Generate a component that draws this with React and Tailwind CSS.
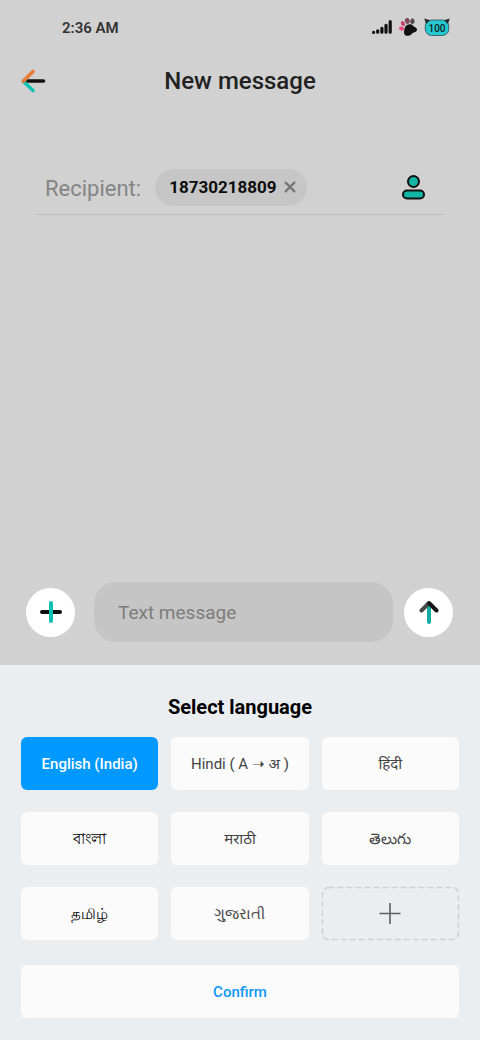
import { useState } from "react";
import { X } from "lucide-react";

const languages = [
  { id: "en", label: "English (India)" },
  { id: "hi-latn", label: "Hindi ( A ➝ अ )" },
  { id: "hi", label: "हिंदी" },
  { id: "bn", label: "বাংলা" },
  { id: "mr", label: "मराठी" },
  { id: "te", label: "తెలుగు" },
  { id: "ta", label: "தமிழ்" },
  { id: "gu", label: "ગુજરાતી" },
];

// Bengali and Tamil glyphs are thin, so they get a darker colour
const thinScripts = ["bn", "ta"];

function SignalIcon() {
  return (
    <svg width="20" height="14" viewBox="0 0 20 14" fill="none" stroke="#111" strokeWidth="3.2" strokeLinecap="round">
      <path d="M1.6 12.3v.1M5.7 10.8v1.4M9.9 8.3v3.9M14 5.3v6.9M18.2 1.7v10.5" />
    </svg>
  );
}

function PawIcon() {
  return (
    <svg width="18" height="18" viewBox="0 0 18 18">
      <ellipse cx="2.6" cy="10.6" rx="2.6" ry="2" fill="#ea4a7d" transform="rotate(15 2.6 10.6)" />
      <ellipse cx="3.9" cy="5.6" rx="1.9" ry="2.6" fill="#c8426f" transform="rotate(-35 3.9 5.6)" />
      <ellipse cx="8.3" cy="2.9" rx="2" ry="2.8" fill="#8f4660" stroke="#4a2a36" strokeWidth="0.5" transform="rotate(-12 8.3 2.9)" />
      <ellipse cx="13.4" cy="3.2" rx="1.8" ry="2.5" fill="#5c4a52" stroke="#33242b" strokeWidth="0.5" />
      <path
        d="M8 7C10 5.900 13.200 6 14.300 8c.7 1.200 3.600 1.200 3.700 3.500.1 2.200-2 2.700-3.300 3-1.400.3-2.600 3-5.400 3.300-2.900.3-4.500-1.500-4.300-4.100.1-1.400.4-1.800.6-3C5.800 9.200 6.600 7.700 8 7z"
        fill="#111"
      />
    </svg>
  );
}

function BatteryIcon() {
  return (
    <svg width="26" height="18" viewBox="0 0 26 18" role="img" aria-label="Battery 100%">
      <rect x="1.2" y="2" width="23.6" height="15.5" rx="6.5" fill="#25c9cf" stroke="#2b4a4c" strokeWidth="0.8" />
      <path d="M.3.500l5.700 1.700-4 3.800zM25.700.500l-5.700 1.700 4 3.800z" fill="#1c2a2b" />
      <text x="13" y="13.500" textAnchor="middle" fontSize="10" fontWeight="500" fill="#122">100</text>
    </svg>
  );
}

function BackIcon() {
  return (
    <svg width="26" height="24" viewBox="0 0 26 24" fill="none" strokeWidth="3.6" strokeLinecap="round">
      <path d="M4 12h19.500" stroke="#111" />
      <path d="M3.500 12.500l9.500 9" stroke="#10c2b2" />
      <path d="M3.500 12l9.500-9.500" stroke="#e87a35" />
    </svg>
  );
}

function ContactIcon() {
  return (
    <svg width="24" height="26" viewBox="0 0 24 26" fill="#12b5a6" stroke="#111" strokeWidth="2">
      <circle cx="12.500" cy="7.500" r="5.500" />
      <rect x="2" y="16.500" width="21" height="8" rx="4" />
    </svg>
  );
}

function AttachIcon() {
  return (
    <svg width="24" height="24" viewBox="0 0 24 24" fill="none" strokeWidth="4" strokeLinecap="round">
      <path d="M3 12h18" stroke="#111" />
      <path d="M12 3v18" stroke="#10c2b2" />
    </svg>
  );
}

function SendIcon() {
  return (
    <svg width="20" height="24" viewBox="0 0 20 24" fill="none" strokeWidth="4" strokeLinecap="round">
      <path d="M10 4v18" stroke="#12ada0" />
      <path d="M9.500 3.500l-7 7" stroke="#4a4a4a" />
      <path d="M10 3l7.500 7.500" stroke="#161616" />
    </svg>
  );
}

export default function App() {
  const [selected, setSelected] = useState("en");
  const [recipients, setRecipients] = useState(["18730218809"]);
  const [message, setMessage] = useState("");

  const removeRecipient = (number) => {
    setRecipients(recipients.filter((r) => r !== number));
  };

  const tileColors = (id) => {
    if (selected === id) return "bg-[#0099ff] text-white font-medium";
    if (thinScripts.includes(id)) return "bg-[#fbfbfb] text-black";
    return "bg-[#fbfbfb] text-[#444]";
  };

  return (
    <div className="min-h-screen flex flex-col bg-[#d1d1d1] font-[Roboto,'Noto_Sans',sans-serif] text-[#222]">
      {/* Status bar */}
      <div className="h-14 pl-[62px] pr-[30px] flex items-center justify-between">
        <span className="text-[15px] font-semibold text-[#333]">2:36 AM</span>
        <div className="flex items-center gap-[7px] pb-[2px]">
          <SignalIcon />
          <PawIcon />
          <BatteryIcon />
        </div>
      </div>

      {/* Header */}
      <header className="h-[50px] px-5 grid grid-cols-[32px_1fr_32px] items-center">
        <button type="button" aria-label="Back">
          <BackIcon />
        </button>
        <h1 className="text-2xl font-medium text-center">New message</h1>
      </header>

      {/* Recipient */}
      <div className="mx-[35px] mt-[54px] h-[55px] flex items-center border-b border-[#bcbcbc] pl-[10px] pr-5">
        <span className="pt-[2px] text-[22px] text-[#858585]">Recipient:</span>
        <div className="flex flex-1 ml-[14px]">
          {recipients.map((number) => (
            <div key={number} className="h-[37px] pl-[14px] pr-[10px] rounded-full bg-[#c6c6c6] flex items-center gap-[7px]">
              <span className="pt-[2px] text-[17px] font-bold text-[#0d0d0d]">{number}</span>
              <button type="button" aria-label={`Remove ${number}`} onClick={() => removeRecipient(number)}>
                <X className="w-[14px] h-[14px] text-[#777] scale-125" strokeWidth={3} />
              </button>
            </div>
          ))}
        </div>
        <button type="button" aria-label="Choose contact">
          <ContactIcon />
        </button>
      </div>

      <div className="flex-1" />

      {/* Composer */}
      <div className="pl-[26px] pr-[27px] pt-5 pb-[23px] flex items-center">
        <button type="button" aria-label="Add attachment" className="w-[49px] h-[49px] shrink-0 rounded-full bg-white flex items-center justify-center">
          <AttachIcon />
        </button>
        <input
          type="text"
          aria-label="Text message"
          placeholder="Text message"
          value={message}
          onChange={(e) => setMessage(e.target.value)}
          className="flex-1 min-w-0 h-[60px] ml-[19px] mr-[11px] px-6 rounded-[22px] bg-[#c5c5c5] text-[19px] placeholder:text-[#7c7c7c] outline-none"
        />
        <button type="button" aria-label="Send" className="w-[49px] h-[49px] shrink-0 rounded-full bg-white flex items-center justify-center">
          <SendIcon />
        </button>
      </div>

      {/* Language picker */}
      <section className="bg-[#eaeef1] px-[21px] pt-[30px] pb-[22px]">
        <h2 className="text-[20px] leading-6 font-bold text-black text-center">Select language</h2>
        <div className="mt-[18px] grid grid-cols-3 gap-x-[13px] gap-y-[22px]">
          {languages.map((lang) => (
            <button
              key={lang.id}
              type="button"
              aria-pressed={selected === lang.id}
              onClick={() => setSelected(lang.id)}
              className={`h-[53px] pt-[2px] rounded-md text-[15px] ${tileColors(lang.id)}`}
            >
              {lang.label}
            </button>
          ))}
          <button type="button" aria-label="Add language" className="h-[53px] flex items-center justify-center relative">
            <svg className="absolute inset-0 w-full h-full overflow-visible" fill="none">
              <rect x="0.500" y="0.500" width="99%" height="52" rx="6" stroke="#cfd2d5" strokeWidth="1.500" strokeDasharray="6 3" />
            </svg>
            <svg width="22" height="22" viewBox="0 0 22 22" stroke="#5c5f62" strokeWidth="1.600">
              <path d="M.5 10.500h21M11 0v21" />
            </svg>
          </button>
        </div>
        <button type="button" className="mt-[25px] w-full h-[53px] pt-[2px] rounded-md bg-[#fbfbfb] text-[15px] font-medium text-[#0f97f8]">
          Confirm
        </button>
      </section>
    </div>
  );
}
